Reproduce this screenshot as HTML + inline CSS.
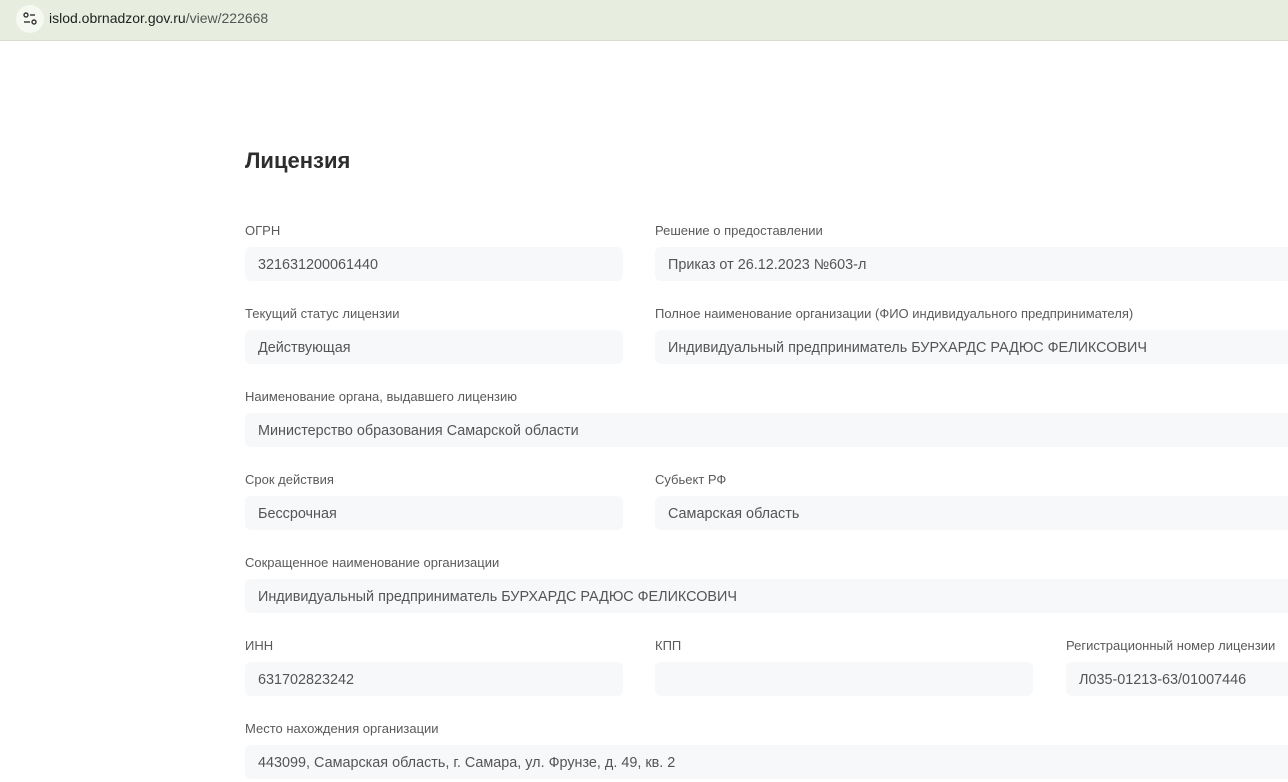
<!DOCTYPE html><html><head><meta charset="utf-8"><style>
body{margin:0;width:1288px;height:782px;overflow:hidden;background:#fff;font-family:"Liberation Sans",sans-serif;position:relative}
.bar{position:absolute;left:0;top:0;width:1288px;height:40px;background:#e7eedf;border-bottom:1px solid #d6ddd0}
.ic{position:absolute;left:16px;top:5px;width:28px;height:28px;border-radius:50%;background:#f6f8f2}
.url{position:absolute;left:49px;top:10px;font-size:14px;color:#1f1f1f}
.url span{color:#555}
h1{position:absolute;left:245px;top:148px;margin:0;font-size:22px;font-weight:bold;color:#2d2d2d}
.l{position:absolute;font-size:13px;color:#5a5a5a;margin-top:0px}
.b{position:absolute;height:34px;background:#f7f8fa;border-radius:6px;font-size:14.4px;color:#555;line-height:36px;padding-left:13px;box-sizing:border-box}
</style></head><body>
<div class="bar"><div class="ic"><svg width="28" height="28" viewBox="0 0 28 28"><circle cx="10" cy="10" r="2" fill="none" stroke="#333" stroke-width="1.4"/><line x1="14" y1="10" x2="19" y2="10" stroke="#333" stroke-width="1.4"/><line x1="8" y1="17" x2="14" y2="17" stroke="#333" stroke-width="1.4"/><circle cx="18" cy="17" r="2" fill="none" stroke="#333" stroke-width="1.4"/></svg></div><div class="url">islod.obrnadzor.gov.ru<span>/view/222668</span></div></div>
<h1>Лицензия</h1>
<div class="l" style="left:245px;top:223px">ОГРН</div><div class="b" style="left:245px;top:247px;width:378px">321631200061440</div>
<div class="l" style="left:655px;top:223px">Решение о предоставлении</div><div class="b" style="left:655px;top:247px;width:650px">Приказ от 26.12.2023 №603-л</div>
<div class="l" style="left:245px;top:306px">Текущий статус лицензии</div><div class="b" style="left:245px;top:330px;width:378px">Действующая</div>
<div class="l" style="left:655px;top:306px">Полное наименование организации (ФИО индивидуального предпринимателя)</div><div class="b" style="left:655px;top:330px;width:650px">Индивидуальный предприниматель БУРХАРДС РАДЮС ФЕЛИКСОВИЧ</div>
<div class="l" style="left:245px;top:389px">Наименование органа, выдавшего лицензию</div><div class="b" style="left:245px;top:413px;width:1060px">Министерство образования Самарской области</div>
<div class="l" style="left:245px;top:472px">Срок действия</div><div class="b" style="left:245px;top:496px;width:378px">Бессрочная</div>
<div class="l" style="left:655px;top:472px">Субьект РФ</div><div class="b" style="left:655px;top:496px;width:650px">Самарская область</div>
<div class="l" style="left:245px;top:555px">Сокращенное наименование организации</div><div class="b" style="left:245px;top:579px;width:1060px">Индивидуальный предприниматель БУРХАРДС РАДЮС ФЕЛИКСОВИЧ</div>
<div class="l" style="left:245px;top:638px">ИНН</div><div class="b" style="left:245px;top:662px;width:378px">631702823242</div>
<div class="l" style="left:655px;top:638px">КПП</div><div class="b" style="left:655px;top:662px;width:378px"></div>
<div class="l" style="left:1066px;top:638px">Регистрационный номер лицензии</div><div class="b" style="left:1066px;top:662px;width:300px">Л035-01213-63/01007446</div>
<div class="l" style="left:245px;top:721px">Место нахождения организации</div><div class="b" style="left:245px;top:745px;width:1060px">443099, Самарская область, г. Самара, ул. Фрунзе, д. 49, кв. 2</div>
</body></html>
